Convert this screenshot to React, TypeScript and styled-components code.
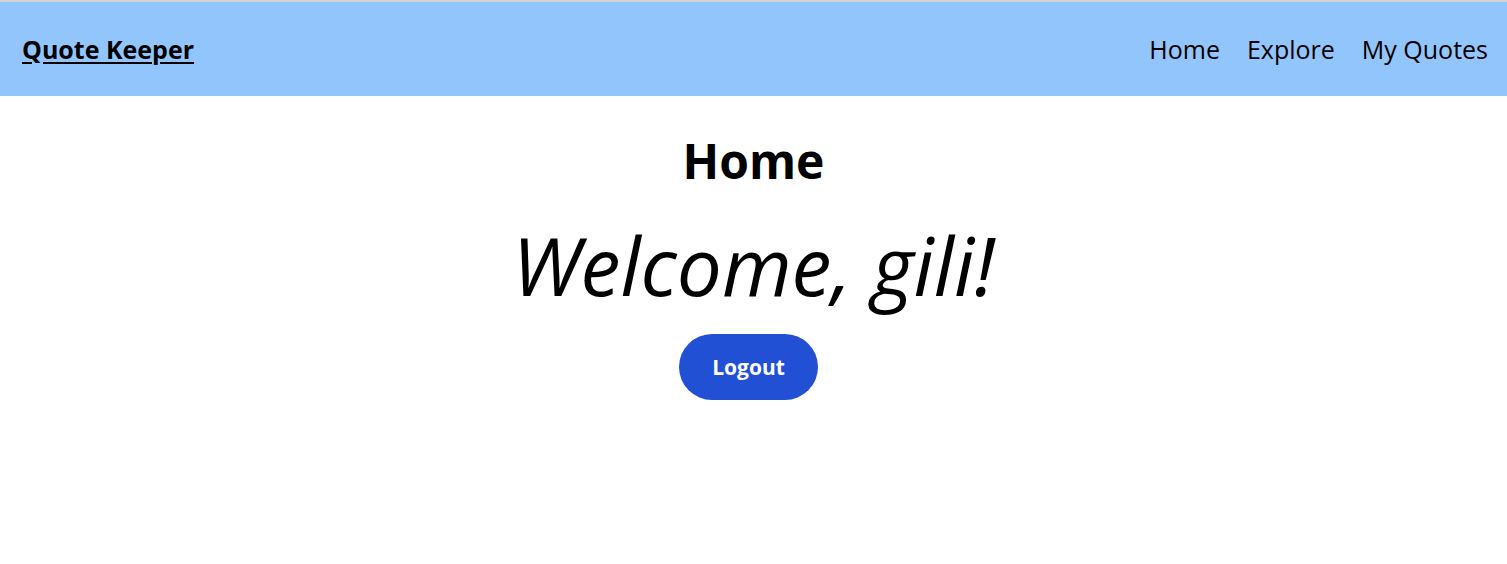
import React from "react";
import styled, { createGlobalStyle } from "styled-components";

const GlobalStyle = createGlobalStyle`
  body {
    margin: 0;
    font-family: "Open Sans", "Noto Sans", sans-serif;
    background: #fff;
    color: #000;
  }
`;

const NavBar = styled.header`
  display: flex;
  align-items: center;
  justify-content: space-between;
  height: 94px;
  padding: 0 19px 0 22px;
  background-color: #93c5fd;
  border-top: 2px solid #d4d4d4;
`;

const Brand = styled.a`
  font-size: 25px;
  font-weight: 700;
  color: #000;
  text-decoration: underline;
  text-underline-offset: 3px;
`;

const NavLinks = styled.nav`
  display: flex;
  gap: 27px;
`;

const NavLink = styled.a`
  font-size: 25px;
  color: #000;
  text-decoration: none;
`;

const Main = styled.main`
  display: flex;
  flex-direction: column;
  align-items: center;
`;

const Title = styled.h1`
  margin: 36px 0 0;
  font-size: 48px;
  font-weight: 700;
  line-height: 1.2;
`;

const Welcome = styled.h2`
  margin: 27px 0 0;
  font-size: 80px;
  font-weight: 400;
  font-style: italic;
  line-height: 1.2;
`;

const LogoutButton = styled.button`
  margin: 21px 10px 0 0;
  height: 66px;
  padding: 0 33px;
  border: none;
  border-radius: 33px;
  background-color: #2150d4;
  color: #fff;
  font-family: inherit;
  font-size: 21px;
  font-weight: 700;
  cursor: pointer;
`;

export default function App() {
  return (
    <>
      <GlobalStyle />
      <NavBar>
        <Brand>Quote Keeper</Brand>
        <NavLinks>
          <NavLink>Home</NavLink>
          <NavLink>Explore</NavLink>
          <NavLink>My Quotes</NavLink>
        </NavLinks>
      </NavBar>
      <Main>
        <Title>Home</Title>
        <Welcome>Welcome, gili!</Welcome>
        <LogoutButton>Logout</LogoutButton>
      </Main>
    </>
  );
}
